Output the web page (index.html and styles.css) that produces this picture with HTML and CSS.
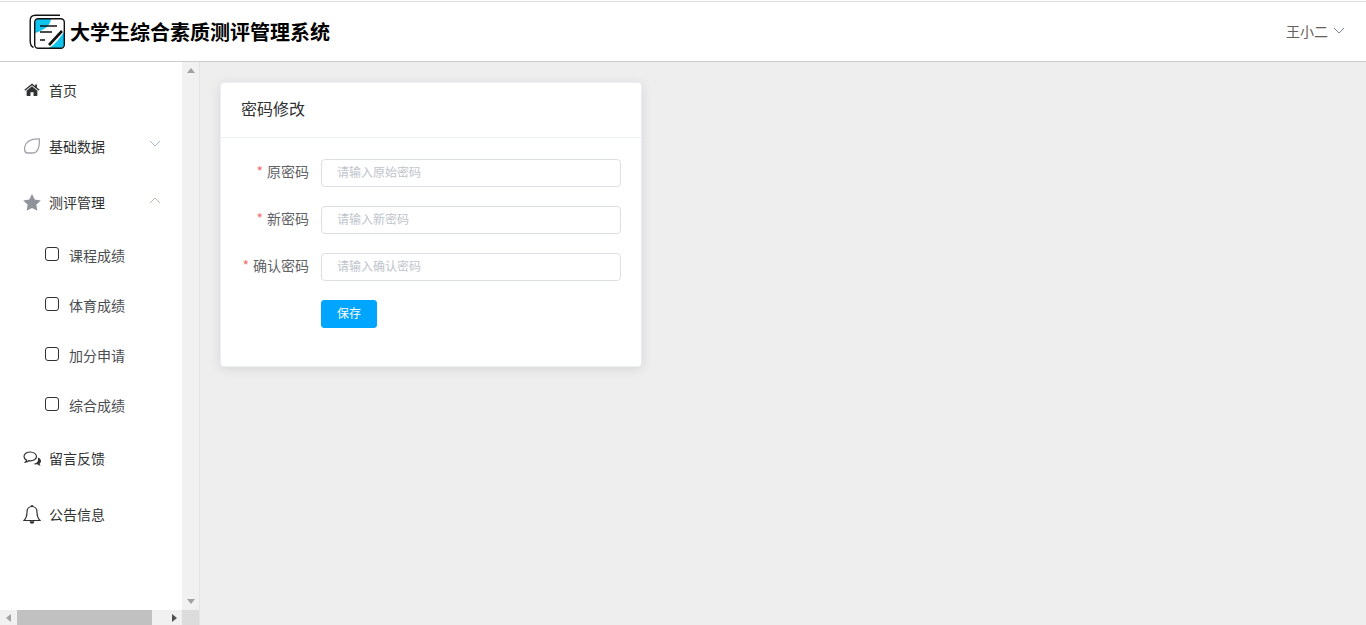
FILE: index.html
```html
<!DOCTYPE html>
<html lang="zh-CN">
<head>
<meta charset="utf-8">
<title>大学生综合素质测评管理系统</title>
<link rel="stylesheet" href="styles.css">
</head>
<body>
<div class="app">
  <header class="topbar">
    <div class="brand">
      <svg class="logo" viewBox="0 0 36 36" width="36" height="36" aria-hidden="true">
        <path d="M31 1.200H6.500Q1.200 1.200 1.200 6.500V27Q1.200 32 4.500 33.500" fill="none" stroke="#111" stroke-width="1.400"/>
        <rect x="5.700" y="4.700" width="29.600" height="29.600" rx="3.500" fill="#fff"/>
        <path d="M6 9Q6 5 10 5H22Q21 12 15 15Q10 18 6 19Z" fill="#10c4ee"/>
        <path d="M35 18V30Q35 34 31 34H20Q25 31 29 26Z" fill="#10c4ee"/>
        <rect x="5.700" y="4.700" width="29.600" height="29.600" rx="3.500" fill="none" stroke="#111" stroke-width="1.400"/>
        <path d="M11 12H28M11 18H23M11 26H16" fill="none" stroke="#111" stroke-width="1.500"/>
        <path d="M20 31L33 17" fill="none" stroke="#111" stroke-width="2.600"/>
      </svg>
      <span class="brand-title">大学生综合素质测评管理系统</span>
    </div>
    <div class="user">
      <span>王小二</span>
      <svg class="chev user-chev" viewBox="0 0 12 7" width="12" height="7" aria-hidden="true"><path d="M1 1l5 5 5-5"/></svg>
    </div>
  </header>
  <div class="body-row">
    <aside class="aside">
      <div class="aside-top">
        <nav class="menu">
          <div class="item">
            <svg class="ico" viewBox="-1 -.5 20 15.500" width="18" height="14" aria-hidden="true"><path fill="#303133" d="M9 3.200L3 8v5q0 .8.800.8H7.300V9.700h3.400v4.100h3.500q.8 0 .8-.8V8zM9 0L.5 6.900l1 1.200L9 2l7.500 6.100 1-1.200L14.500 4.500V1h-2v1.900z"/></svg>
            <span>首页</span>
          </div>
          <div class="item">
            <svg class="ico" viewBox="0 0 18 16" width="18" height="16" aria-hidden="true"><path fill="none" stroke="#a0a3a9" stroke-width="1.300" d="M16.300.8C10 .6 3 2 1.700 9 1.300 12 1.500 14.500 4 15h5.500C14 15 17 11 16.300.8z"/></svg>
            <span class="grow">基础数据</span>
            <svg class="chev chev-closed" viewBox="0 0 12 7" width="12" height="7" aria-hidden="true"><path d="M1 1l5 5 5-5"/></svg>
          </div>
          <div class="item">
            <svg class="ico" viewBox="0 0 18 17" width="18" height="17" aria-hidden="true"><path fill="#909399" d="M9 0l2.700 5.600 6.100.8-4.500 4.300 1.100 6.100L9 13.900l-5.400 2.900 1.100-6.100L.2 6.400l6.100-.8z"/></svg>
            <span class="grow">测评管理</span>
            <svg class="chev chev-open" viewBox="0 0 12 7" width="12" height="7" aria-hidden="true"><path d="M1 6l5-5 5 5"/></svg>
          </div>
          <div class="sub"><i class="box"></i><span>课程成绩</span></div>
          <div class="sub"><i class="box"></i><span>体育成绩</span></div>
          <div class="sub"><i class="box"></i><span>加分申请</span></div>
          <div class="sub"><i class="box"></i><span>综合成绩</span></div>
          <div class="item">
            <svg class="ico" viewBox="0 0 18 15" width="18" height="15" aria-hidden="true"><path fill="#303133" d="M14.800 6.500c2 .6 3.200 2 3.200 3.500 0 1.100-.6 2-1.500 2.700.2.800.7 1.500 1.200 2-1.300-.1-2.500-.6-3.500-1.400-1.300.3-2.900.1-4-.5 2.500-.2 4.800-1.300 4.800-4 .1-.8 0-1.500-.2-2.300z"/><path fill="none" stroke="#303133" stroke-width="1.200" d="M7.300 1C3.800 1 1 3 1 5.500c0 1.500 1 2.800 2.500 3.600-.2.800-.6 1.500-1.100 2 1.300-.2 2.400-.7 3.300-1.400.5.100 1 .1 1.600.1 3.500 0 6.200-2 6.200-4.300S10.800 1 7.300 1z"/></svg>
            <span>留言反馈</span>
          </div>
          <div class="item">
            <svg class="ico" viewBox="0 0 18 19" width="18" height="19" aria-hidden="true"><path fill="none" stroke="#303133" stroke-width="1.200" d="M9 1.500c-3 0-5 2.300-5 5.500 0 4.500-1 6.500-3 8.500h16c-2-2-3-4-3-8.500 0-3.200-2-5.500-5-5.500z"/><path fill="#303133" d="M7.800.2h2.400v1.800H7.800zM6.500 16.200h5Q11 18.800 9 18.800T6.500 16.200z"/></svg>
            <span>公告信息</span>
          </div>
        </nav>
        <div class="vbar"><i class="arrow up"></i><i class="arrow down"></i></div>
      </div>
      <div class="aside-bottom">
        <div class="hbar"><i class="arrow left"></i><div class="thumb"></div><i class="arrow right"></i></div>
        <div class="corner"></div>
      </div>
    </aside>
    <main class="main">
      <section class="card">
        <div class="card-head">密码修改</div>
        <form class="card-body">
          <div class="field"><label class="label"><em>*</em>原密码</label><input class="input" type="password" placeholder="请输入原始密码"></div>
          <div class="field"><label class="label"><em>*</em>新密码</label><input class="input" type="password" placeholder="请输入新密码"></div>
          <div class="field"><label class="label"><em>*</em>确认密码</label><input class="input" type="password" placeholder="请输入确认密码"></div>
          <div class="field"><span class="label"></span><button class="btn" type="button">保存</button></div>
        </form>
      </section>
    </main>
  </div>
</div>
</body>
</html>
```
FILE: styles.css
```css
* { box-sizing: border-box; }
html, body { margin: 0; height: 100%; overflow: hidden; }
body { font-family: "Noto Sans CJK SC", "Noto Sans", sans-serif; font-size: 14px; color: #303133; background: #eee; }
.app { height: 625px; display: flex; flex-direction: column; background: #fff; padding-top: 1px; }

.topbar { height: 61px; flex: none; background: #fff; border-top: 1px solid #ddd; border-bottom: 1px solid #ccc; display: flex; align-items: center; justify-content: space-between; padding: 0 21px 0 29px; }
.brand { display: flex; align-items: center; gap: 5px; }
.logo { display: block; flex: none; }
.brand-title { font-size: 20px; font-weight: 700; color: #000; line-height: 28px; }
.user { display: flex; align-items: center; gap: 5px; color: #66605a; line-height: 20px; padding-bottom: 2px; }
.chev { display: block; flex: none; fill: none; stroke: #a9b8c8; stroke-width: 1; }
.chev-closed { margin-bottom: 6px; }
.chev-open { stroke: #c4b6aa; margin-bottom: 4px; }
.user-chev { stroke: #7b8794; }

.body-row { flex: 1; min-height: 0; display: flex; }
.aside { width: 200px; flex: none; display: flex; flex-direction: column; background: #fff; border-right: 1px solid #e4e4e4; }
.aside-top { flex: 1; min-height: 0; display: flex; }
.menu { flex: 1; min-width: 0; background: #fff; }
.item { height: 56px; display: flex; align-items: center; padding: 0 21px 0 23px; }
.item .ico { display: block; flex: none; margin-right: 8px; }
.grow { flex: 1; }
.sub { height: 50px; display: flex; align-items: center; padding-left: 45px; color: #4a4c50; }
.box { display: block; width: 14px; height: 14px; border: 1.5px solid #303133; border-radius: 3px; margin-right: 10px; margin-bottom: 2px; }
.vbar { width: 17px; flex: none; background: #f1f1f1; display: flex; flex-direction: column; justify-content: space-between; align-items: center; padding: 6px 0 6px; }
.arrow { display: block; width: 0; height: 0; border: 4px solid transparent; }
.arrow.up { border-top: 0; border-bottom: 5px solid #a3a3a3; }
.arrow.down { border-bottom: 0; border-top: 5px solid #a3a3a3; }
.arrow.left { border-left: 0; border-right: 5px solid #a3a3a3; margin-left: 6px; }
.arrow.right { border-right: 0; border-left: 5px solid #505050; margin-right: 5px; }
.aside-bottom { height: 15px; flex: none; display: flex; }
.hbar { flex: 1; min-width: 0; background: #f1f1f1; display: flex; align-items: center; }
.thumb { width: 135px; height: 100%; background: #c1c1c1; margin: 0 auto 0 6px; }
.corner { width: 17px; flex: none; background: #dcdcdc; }

.main { flex: 1; min-width: 0; background: #eee; padding: 20px; }
.card { width: 422px; height: 285px; background: #fff; border: 1px solid #ebeef5; border-radius: 4px; box-shadow: 0 2px 12px rgba(0, 0, 0, .1); }
.card-head { height: 55px; padding: 0 20px 4px; display: flex; align-items: center; font-size: 16px; border-bottom: 1px solid #ebeef5; }
.card-body { padding: 21px 20px 0 0; display: flex; flex-direction: column; gap: 19px; }
.field { display: flex; align-items: center; height: 28px; }
.label { width: 88px; height: 28px; flex: none; margin-right: 12px; text-align: right; color: #606266; line-height: 24px; }
.label em { font-style: normal; color: #f56c6c; margin-right: 4px; }
.input { flex: 1; min-width: 0; height: 28px; border: 1px solid #dcdfe6; border-radius: 4px; padding: 0 15px 4px; font: 12px "Noto Sans CJK SC", sans-serif; color: #606266; background: #fff; outline: none; }
.input::placeholder { color: #c0c4cc; opacity: 1; }
.btn { width: 56px; height: 28px; border: 1px solid #00a5ff; border-radius: 3px; background: #00a5ff; color: #fff; font: 12px "Noto Sans CJK SC", sans-serif; padding: 0 0 4px; }
```
